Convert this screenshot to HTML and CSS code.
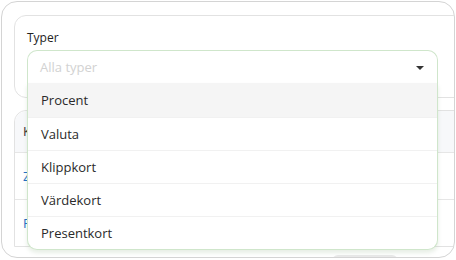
FILE: index.html
```html
<!DOCTYPE html>
<html lang="sv">
	<head>
		<meta charset="utf-8">
		<title>Typer</title>
		<link rel="stylesheet" href="styles.css">
	</head>
	<body>
	<div class="panel">
		<div class="filter">
			<div class="label">Typer</div>
			<div class="select">
				<div class="select-box">
					<span class="placeholder">Alla typer</span>
					<span class="caret"></span>
				</div>
				<ul class="menu">
					<li class="active">Procent</li>
					<li>Valuta</li>
					<li>Klippkort</li>
					<li>Värdekort</li>
					<li>Presentkort</li>
				</ul>
			</div>
		</div>

		<div class="table">
			<div class="row head">Kod</div>
			<div class="row link">Zon</div>
			<div class="row link">Fri</div>
		</div>
		<div class="more"></div>
	</div>
	</body>
</html>
```

FILE: styles.css
```css
body {
	margin: 0;
	background: #fff;
	font-family: "Open Sans", "Noto Sans", sans-serif;
	color: #333;
}

.panel {
	width: 454px;
	height: 257px;
	margin: 1px 0 0 1px;
	border: 1px solid #d4d4d4;
	border-radius: 16px;
	overflow: hidden;
	padding: 13px 0 0 12px;
	box-sizing: border-box;
	position: relative;
}

.filter {
	width: 470px;
	height: 83px;
	border: 1px solid #e2e2e2;
	border-radius: 12px;
	box-sizing: border-box;
	padding: 14px 0 0 12px;
}

.label {
	font-size: 12px;
	line-height: 16px;
	color: #222;
	margin-bottom: 4px;
}

.select {
	position: relative;
	width: 411px;
	z-index: 10;
}

.select-box {
	height: 33px;
	display: flex;
	align-items: center;
	justify-content: space-between;
	padding: 0 13px 0 12px;
	box-sizing: border-box;
	font-size: 13px;
	border: 1px solid #cfe6cb;
	border-bottom: none;
	border-radius: 10px 10px 0 0;
	background: #fff;
}

.placeholder {
	color: #d2d2d2;
}

.caret {
	width: 0;
	height: 0;
	border-left: 4px solid transparent;
	border-right: 4px solid transparent;
	border-top: 4px solid #333;
	margin-top: 1px;
}

.menu {
	position: absolute;
	top: 33px;
	left: 0;
	right: 0;
	margin: 0;
	padding: 0;
	list-style: none;
	background: #fff;
	border: 1px solid #cfe6cb;
	border-top: none;
	border-radius: 0 0 10px 10px;
	box-shadow: 0 3px 4px rgba(120, 160, 110, 0.18);
	overflow: hidden;
}

.menu li {
	height: 32px;
	line-height: 32px;
	padding-left: 13px;
	font-size: 13px;
	color: #2a2a2a;
	border-top: 1px solid #f1f1f1;
}

.menu li:first-child {
	border-top: none;
	height: 34px;
	line-height: 34px;
}

.menu li.active {
	background: #f5f5f5;
}

.table {
	width: 470px;
	margin-top: 12px;
	border: 1px solid #e2e2e2;
	border-radius: 12px 12px 0 0;
	box-sizing: border-box;
}

.row {
	height: 46px;
	line-height: 46px;
	padding-left: 8px;
	font-size: 13px;
	border-top: 1px solid #e6e6e6;
}

.row.head {
	height: 41px;
	line-height: 41px;
	border-top: none;
	background: #f7f8fa;
	border-radius: 12px 12px 0 0;
	color: #333;
}

.row.link {
	color: #1f6fc5;
}

.more {
	position: absolute;
	left: 330px;
	bottom: -10px;
	width: 66px;
	height: 12px;
	border-radius: 6px;
	background: #e9e9e9;
}
```
